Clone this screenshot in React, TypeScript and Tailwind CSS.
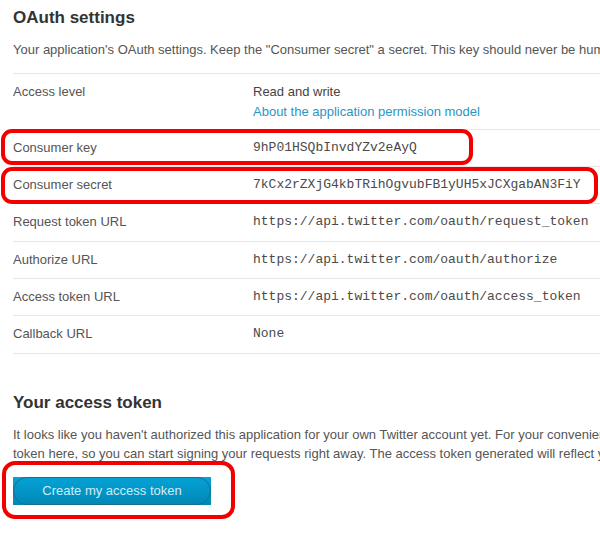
import React from "react";

const rows: { label: string; value: string; mono?: boolean; link?: string }[] = [
  { label: "Access level", value: "Read and write", link: "About the application permission model" },
  { label: "Consumer key", value: "9hP01HSQbInvdYZv2eAyQ", mono: true },
  { label: "Consumer secret", value: "7kCx2rZXjG4kbTRihOgvubFB1yUH5xJCXgabAN3FiY", mono: true },
  { label: "Request token URL", value: "https://api.twitter.com/oauth/request_token", mono: true },
  { label: "Authorize URL", value: "https://api.twitter.com/oauth/authorize", mono: true },
  { label: "Access token URL", value: "https://api.twitter.com/oauth/access_token", mono: true },
  { label: "Callback URL", value: "None", mono: true },
];

export default function App() {
  return (
    <div className="relative w-[600px] h-[533px] overflow-hidden bg-white font-['Liberation_Sans',Arial,sans-serif] text-[13px] text-[#555]">
      <div className="w-[960px] pl-[13px]">
        <h2 className="pt-[8px] text-[17px] leading-[20px] font-bold text-[#333]">OAuth settings</h2>
        <p className="mt-[13px] leading-[18px] whitespace-nowrap">
          Your application's OAuth settings. Keep the "Consumer secret" a secret. This key should never be human-readable in your application.
        </p>
        <div className="mt-[14px] border-b border-[#e8e8e8]">
          {rows.map((r) => (
            <div
              key={r.label}
              className={`flex border-t border-[#e8e8e8] pt-[9px] leading-[18.33px] ${r.link ? "pb-[7px]" : "pb-[9px]"}`}
            >
              <div className="w-[240px] shrink-0">{r.label}</div>
              <div>
                <div className={r.mono ? "font-['Liberation_Mono','Courier_New',monospace] text-[#4a4a4a]" : "text-[#444]"}>{r.value}</div>
                {r.link && <a className="block mt-[2px] text-[#2a95c5]">{r.link}</a>}
              </div>
            </div>
          ))}
        </div>
        <h2 className="mt-[39px] text-[17px] leading-[20px] font-bold text-[#333]">Your access token</h2>
        <p className="mt-[12px] leading-[19px] whitespace-nowrap">
          It looks like you haven't authorized this application for your own Twitter account yet. For your convenience, we give you the opportunity to create your OAuth access
          <br />
          token here, so you can start signing your requests right away. The access token generated will reflect your application's current permission level.
        </p>
        <div className="mt-[14px] w-[198px] h-[28px] bg-gradient-to-b from-[#05a3d6] to-[#0087b5]">
          <button className="w-full h-full rounded-full border border-[#1b6d8c] text-[#cdeef9] text-[13px] leading-[26px]">
            Create my access token
          </button>
        </div>
      </div>
      <div className="absolute left-[1px] top-[129px] w-[472px] h-[36px] rounded-[11px] border-4 border-[#f20000]" />
      <div className="absolute left-[1px] top-[167px] w-[597px] h-[37px] rounded-[11px] border-4 border-[#f20000]" />
      <div className="absolute left-[2px] top-[461px] w-[233px] h-[58px] rounded-[13px] border-4 border-[#f20000]" />
    </div>
  );
}
